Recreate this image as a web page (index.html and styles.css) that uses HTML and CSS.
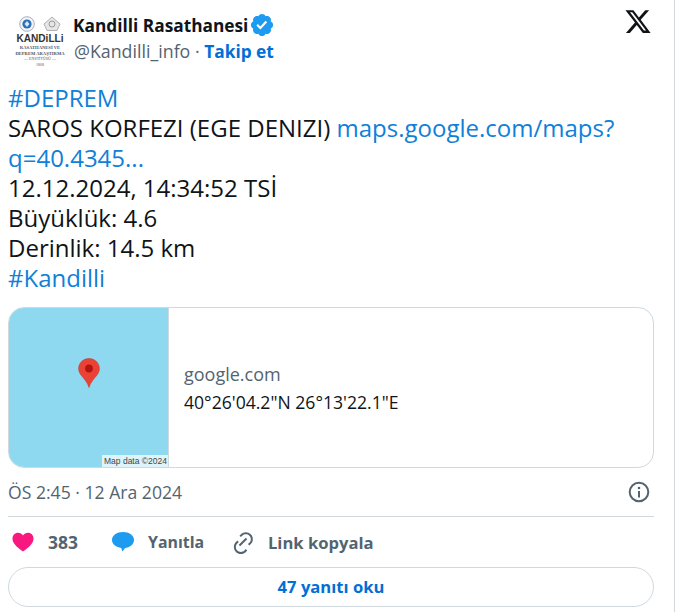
FILE: index.html
```html
<!DOCTYPE html>
<html lang="tr">
<head>
<meta charset="UTF-8">
<meta name="viewport" content="width=device-width, initial-scale=1.0">
<title>Kandilli Rasathanesi</title>
<link rel="stylesheet" href="styles.css">
</head>
<body>
    <div class="tweet">
        <div class="header">
            <div class="logo">
                <div class="logo-icons">
                    <svg width="16" height="16" viewBox="0 0 16 16"><circle cx="8" cy="8" r="7.300" fill="#f2f3f6" stroke="#a9afbd"/><circle cx="8" cy="8" r="4.600" fill="#2a6fb5"/><path d="M8 5l2.500 3L8 11 5.500 8z" fill="#d5e6f5"/></svg>
                    <svg width="18" height="15" viewBox="0 0 18 15"><path d="M9 1l8 7-3 6.500H4L1 8z" fill="#e6e6e6" stroke="#b0b0b0"/><circle cx="9" cy="8" r="3" fill="none" stroke="#999"/></svg>
                </div>
                <div class="logo-name">KANDiLLi</div>
                <div class="logo-sub">RASATHANESİ VE</div>
                <div class="logo-sub">DEPREM ARAŞTIRMA</div>
                <div class="logo-sub logo-small">— ENSTİTÜSÜ —</div>
                <div class="logo-sub logo-small">1868</div>
            </div>
            <div class="author">
                <div class="author-name">
                    <span>Kandilli Rasathanesi</span>
                    <svg class="badge" width="26" height="26" viewBox="0 0 22 22"><path fill="#1d9bf0" d="M20.396 11c-.018-.646-.215-1.275-.57-1.816-.354-.54-.852-.972-1.438-1.246.223-.607.27-1.264.14-1.897-.131-.634-.437-1.218-.882-1.687-.47-.445-1.053-.75-1.687-.882-.633-.13-1.29-.083-1.897.14-.273-.587-.704-1.086-1.245-1.44S11.647 1.62 11 1.604c-.646.017-1.273.213-1.813.568s-.969.854-1.24 1.44c-.608-.223-1.267-.272-1.902-.14-.635.13-1.22.436-1.69.882-.445.47-.749 1.055-.878 1.688-.13.633-.08 1.29.144 1.896-.587.274-1.087.705-1.443 1.245-.356.54-.555 1.17-.574 1.817.02.647.218 1.276.574 1.817.356.54.856.972 1.443 1.245-.224.606-.274 1.263-.144 1.896.13.634.433 1.218.877 1.688.47.443 1.054.747 1.687.878.633.132 1.29.084 1.897-.136.274.586.705 1.084 1.246 1.439.54.354 1.17.551 1.816.569.647-.016 1.276-.213 1.817-.567s.972-.854 1.245-1.44c.604.239 1.266.296 1.903.164.636-.132 1.22-.447 1.68-.907.46-.46.776-1.044.908-1.681s.075-1.299-.165-1.903c.586-.274 1.084-.705 1.439-1.246.354-.54.551-1.17.569-1.816z"/><path fill="#fff" d="M9.662 14.850l-3.429-3.428 1.293-1.302 2.072 2.072 4.400-4.794 1.347 1.246z"/></svg>
                </div>
                <div class="author-handle">@Kandilli_info · <span class="follow">Takip et</span></div>
            </div>
            <svg class="x-logo" width="28" height="26" viewBox="0 0 24 22"><path fill="#0f1419" d="M18.244 0h3.308l-7.227 8.260 8.502 11.240H16.170l-5.214-6.817L4.990 19.500H1.680l7.730-8.835L1.254 0H8.080l4.713 6.231zm-1.161 17.520h1.833L7.084 1.876H5.117z"/></svg>
        </div>

        <div class="text">
            <a class="link">#DEPREM</a><br>
            SAROS KORFEZI (EGE DENIZI) <a class="link">maps.google.com/maps?<br>q=40.4345...</a><br>
            12.12.2024, 14:34:52 TSİ<br>
            Büyüklük: 4.6<br>
            Derinlik: 14.5 km<br>
            <a class="link">#Kandilli</a>
        </div>

        <div class="card">
            <div class="map">
                <svg class="pin" width="22" height="30" viewBox="0 0 22 30"><path fill="#ea4335" stroke="#c5302a" stroke-width=".5" d="M11 .500C5.200.500.600 5 .600 10.600c0 2.600 1 4.500 2.400 6.500 3 3.900 6.500 7.100 8 12.400 1.500-5.300 5-8.500 8-12.400 1.400-2 2.400-3.900 2.400-6.500C21.400 5 16.800.500 11 .500z"/><circle cx="11" cy="10.500" r="3.900" fill="#b31412"/></svg>
                <span class="map-credit">Map data ©2024</span>
            </div>
            <div class="card-info">
                <div class="card-domain">google.com</div>
                <div class="card-coords">40°26'04.2"N 26°13'22.1"E</div>
            </div>
        </div>

        <div class="meta">
            <span>ÖS 2:45 · 12 Ara 2024</span>
            <svg width="22" height="22" viewBox="0 0 22 22"><circle cx="11" cy="11" r="9.300" fill="none" stroke="#536471" stroke-width="2"/><rect x="10" y="10" width="2" height="6.500" fill="#536471"/><circle cx="11" cy="7" r="1.300" fill="#536471"/></svg>
        </div>

        <div class="actions">
            <div class="action action-like">
                <svg width="24" height="22" viewBox="0 0 24 22"><path fill="#f91880" d="M12 20.500C5 15.500 1.500 12 1.500 7.500 1.500 4 4 1.700 7 1.700c2 0 3.900 1 5 2.800 1.100-1.800 3-2.800 5-2.800 3 0 5.500 2.300 5.500 5.800 0 4.500-3.500 8-10.500 13z"/></svg>
                <span class="count">383</span>
            </div>
            <div class="action action-reply">
                <svg width="24" height="22" viewBox="0 0 24 22"><path fill="#1d9bf0" d="M12 1c6.200 0 11 3.400 11 8 0 4.400-4.400 7.700-9 8-.7 1.300-1.500 2.500-2.600 3.400-.5-1-.9-2.200-1.100-3.500C5.200 16.300 1 13.200 1 9c0-4.600 4.800-8 11-8z"/></svg>
                <span>Yanıtla</span>
            </div>
            <div class="action">
                <svg width="24" height="24" viewBox="0 0 24 24"><path fill="#536471" d="M18.360 5.640c-1.950-1.960-5.110-1.960-7.070 0L9.880 7.050 8.460 5.640l1.420-1.420c2.730-2.730 7.160-2.730 9.900 0 2.730 2.740 2.730 7.170 0 9.900l-1.420 1.420-1.410-1.420 1.410-1.410c1.960-1.960 1.960-5.120 0-7.070zm-2.120 3.530l-7.070 7.070-1.410-1.410 7.070-7.070 1.410 1.410zm-9.900 1.410l1.420 1.420-1.420 1.410c-1.950 1.950-1.950 5.110 0 7.070 1.960 1.950 5.120 1.950 7.070 0l1.410-1.420 1.420 1.420-1.420 1.410c-2.730 2.740-7.160 2.740-9.900 0-2.730-2.730-2.730-7.160 0-9.900l1.420-1.410z"/></svg>
                <span>Link kopyala</span>
            </div>
        </div>

        <div class="read-more">47 yanıtı oku</div>
    </div>
</body>
</html>
```

FILE: styles.css
```css
body {
    font-family: "Open Sans", "Noto Sans", Arial, sans-serif;
    margin: 0;
    padding: 0;
    background-color: #fff;
    color: #0f1419;
}
.tweet {
    width: 646px;
    height: 612px;
    padding: 0 20px 0 8px;
    border-right: 1px solid #cfd9de;
    box-sizing: content-box;
}
.header {
    display: flex;
    align-items: flex-start;
    height: 83px;
}
.logo {
    width: 56px;
    margin: 16px 6px 0 4px;
    text-align: center;
    color: #555;
    line-height: 1;
}
.logo-icons {
    display: flex;
    justify-content: center;
    gap: 8px;
    height: 16px;
}
.logo-name {
    font-family: "Liberation Sans", sans-serif;
    font-size: 11.5px;
    line-height: 13px;
    height: 13px;
    font-weight: bold;
    color: #333;
    transform: scaleX(0.88);
}
.logo-sub {
    font-family: "Liberation Serif", serif;
    font-size: 4.600px;
    font-weight: bold;
    line-height: 5.500px;
    height: 5.500px;
    white-space: nowrap;
}
.logo-small {
    font-size: 4px;
    font-weight: normal;
}
.author {
    flex: 1;
    margin-top: 12px;
}
.author-name {
    display: flex;
    align-items: center;
    gap: 1px;
    font-size: 17.3px;
    font-weight: 700;
    height: 26px;
    margin-left: -1px;
}
.author-handle {
    font-size: 17.8px;
    color: #536471;
    height: 26px;
    margin-top: 1px;
}
.follow {
    color: #006fd6;
    font-weight: 700;
    font-size: 17.3px;
}
.x-logo {
    margin: 10px 2px 0 0;
}
.text {
    font-size: 24px;
    line-height: 30px;
    white-space: nowrap;
}
.link {
    color: #1080d8;
}
.card {
    display: flex;
    height: 161px;
    margin-top: 14px;
    border: 1px solid #cfd9de;
    border-radius: 16px;
    overflow: hidden;
    box-sizing: border-box;
}
.map {
    position: relative;
    width: 159px;
    background-color: #8fd9f0;
    border-right: 1px solid #cfd9de;
}
.pin {
    position: absolute;
    left: 69px;
    top: 50px;
}
.map-credit {
    position: absolute;
    right: 0;
    bottom: 0;
    padding: 0 1px 0 2px;
    background-color: rgba(255, 255, 255, 0.7);
    font-family: "Liberation Sans", sans-serif;
    font-size: 8.5px;
    line-height: 12px;
    color: #444;
    white-space: nowrap;
}
.card-info {
    display: flex;
    flex-direction: column;
    justify-content: center;
    padding-left: 15px;
}
.card-domain {
    color: #536471;
    font-size: 18px;
    line-height: 28px;
}
.card-coords {
    line-height: 28px;
    font-size: 17.6px;
}
.meta {
    display: flex;
    align-items: center;
    justify-content: space-between;
    height: 48px;
    border-bottom: 1px solid #cfd9de;
    color: #536471;
    font-size: 17.6px;
    padding-right: 4px;
}
.actions {
    display: flex;
    align-items: center;
    height: 50px;
    padding-left: 3px;
}
.action {
    display: flex;
    align-items: center;
    gap: 13px;
    font-size: 16.6px;
    font-weight: 700;
    color: #536471;
}
.action-like {
    width: 100px;
}
.action-reply {
    width: 120px;
    font-size: 15.9px;
}
.count {
    font-size: 17.5px;
}
.read-more {
    height: 40px;
    line-height: 38px;
    border: 1px solid #cfd9de;
    border-radius: 20px;
    text-align: center;
    color: #006fd6;
    font-size: 16.6px;
    font-weight: 700;
    box-sizing: border-box;
}
```
